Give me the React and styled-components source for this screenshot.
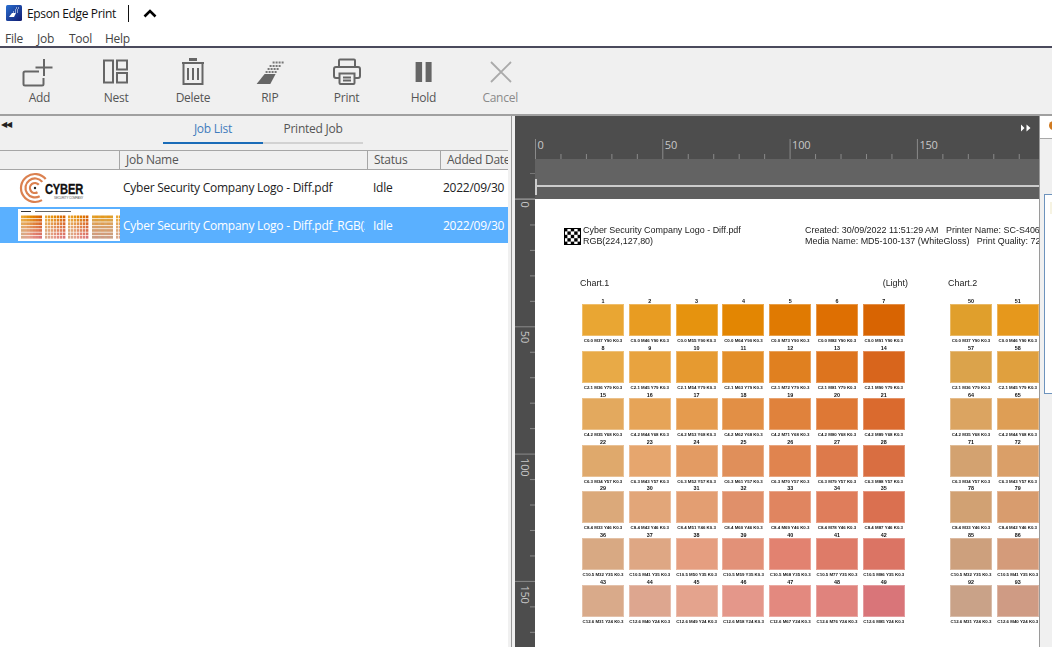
import React from "react";
import styled, { createGlobalStyle } from "styled-components";

const Global = createGlobalStyle`
  html, body { margin: 0; padding: 0; background: #fff; }
  * { box-sizing: border-box; }
`;

const UI = `"Open Sans", "Noto Sans", sans-serif`;

const Shell = styled.div`
  width: 1052px; height: 647px; overflow: hidden; display: flex; flex-direction: column;
  font-family: ${UI}; font-size: 12px; background: #fff; color: #222;
`;
const TitleBar = styled.div`
  height: 30px; display: flex; align-items: center; padding: 0 0 4px 6px; background: #fff; flex: none;
`;
const AppName = styled.span`
  margin-left: 5px; font-size: 12px; letter-spacing: -0.36px; color: #111; width: 101px; white-space: nowrap;
`;
const TitleRule = styled.span`
  width: 1px; height: 17px; background: #111;
`;
const Chevron = styled.svg`
  margin-left: 14px; width: 14px; height: 9px;
`;
const MenuBar = styled.div`
  height: 16px; display: flex; flex: none; padding: 1px 0 0 5px; font-size: 12px; letter-spacing: -0.25px; color: #444; align-items: center;
`;
const MenuItem = styled.span`
  width: ${p => p.$w}px; line-height: 16px;
`;
const Toolbar = styled.div`
  height: 70px; flex: none; display: flex; padding-left: 1px; background: #f0f0f0;
  border-top: 2px solid #4a4a5c; border-bottom: 2px solid #a0a0a0;
`;
const ToolButton = styled.div`
  width: 76.8px; display: flex; flex-direction: column; align-items: center; padding-top: 10px;
  color: ${p => (p.$off ? "#8a8a8a" : "#555")}; font-size: 12px; letter-spacing: -0.25px;
`;
const ToolIcon = styled.svg`
  width: 34px; height: 32px; display: block; overflow: visible;
`;
const ToolLabel = styled.span`
  line-height: 16px;
`;
const Body = styled.div`
  flex: 1; display: flex; min-height: 0;
`;
const LeftPane = styled.div`
  width: 508px; flex: none; display: flex; flex-direction: column; background: #fff; position: relative;
`;
const TabsRow = styled.div`
  height: 34px; flex: none; background: #f0f0f0; display: flex; justify-content: center; padding-top: 5px; padding-left: 18px;
`;
const Tab = styled.div`
  width: 100px; height: 23px; text-align: center; line-height: 16px; letter-spacing: -0.25px;
  border-bottom: 2px solid ${p => (p.$on ? "#1a6cb8" : "#d2d2d2")};
  color: ${p => (p.$on ? "#3f7cbd" : "#555")};
`;
const Collapse = styled.span`
  position: absolute; font-size: 8px; line-height: 8px; color: #222; letter-spacing: -1px; top: ${p => p.$y}px; left: ${p => p.$x}px;
`;
const HeaderRow = styled.div`
  height: 20px; flex: none; display: grid; grid-template-columns: 119px 248px 73px 1fr; background: #f0f0f0;
  border-top: 1px solid #a6a6a6; border-bottom: 1px solid #a6a6a6; color: #555; letter-spacing: -0.25px;
`;
const HeaderCell = styled.div`
  line-height: 17px; padding-left: 6px; white-space: nowrap; overflow: hidden;
  border-left: ${p => (p.$first ? "none" : "1px solid #a6a6a6")};
`;
const Row = styled.div`
  height: ${p => p.$h}px; padding-bottom: ${p => p.$pb || 0}px; flex: none; display: grid; grid-template-columns: 120px 250px 70px 1fr; align-items: center;
  background: ${p => (p.$sel ? "#5ab0ff" : "#fff")}; color: ${p => (p.$sel ? "#fff" : "#222")}; letter-spacing: -0.25px;
`;
const Cell = styled.div`
  padding-left: 3px; white-space: nowrap; overflow: hidden;
`;
const NameCell = styled(Cell)`
  margin-right: 5px;
`;
const Thumb = styled.svg`
  display: block; margin-left: 18px; background: ${p => p.$bg || "transparent"};
`;
const Gutter = styled.div`
  width: 7px; flex: none; background: #f0f0f0; display: flex; padding-left: 3px;
`;
const GutterLine = styled.div`
  width: 1px; background: #999;
`;
const Viewer = styled.div`
  width: 524px; flex: none; display: grid; grid-template-columns: 20px 1fr; grid-template-rows: 83px 1fr; background: #4d4d4d; position: relative;
  overflow: hidden;
`;
const Corner = styled.div`
  background: #4d4d4d; border-bottom: 1px solid #777; position: relative;
  &::after { content: ""; position: absolute; right: 0; top: 57px; width: 5px; height: 1px; background: #777; }
`;
const TopRuler = styled.div`
  display: flex; flex-direction: column; min-width: 0;
`;
const RulerSvg = styled.svg`
  display: block; flex: none;
`;
const PageBand = styled.div`
  flex: 1; background: #636363; position: relative;
`;
const BandFoot = styled.div`
  position: absolute; left: 0; right: 0; top: 26px; height: 14px; background: #5f5f5f; border-top: 2px solid #ccc;
`;
const BandCap = styled.div`
  position: absolute; left: 0; top: 20px; width: 2px; height: 16px; background: #ccc;
`;
const SideRuler = styled.div`
  min-height: 0;
`;
const Page = styled.div`
  background: #fff; overflow: hidden; font-family: "Liberation Sans", Arial, sans-serif; color: #222; filter: blur(0.45px);
  padding: 29px 0 0 29px;
`;
const PageHead = styled.div`
  display: flex; height: 24px; width: 700px;
`;
const Checker = styled.svg`
  width: 17px; height: 17px; flex: none; margin-right: 2px; display: block;
`;
const HeadText = styled.div`
  font-size: 8.95px; line-height: 10.5px; white-space: nowrap; width: 222px; margin-top: -3px; color: #222;
`;
const Charts = styled.div`
  display: flex; margin-top: 26px; margin-left: 16px; width: 700px;
`;
const Chart = styled.div`
  width: ${p => p.$w}px; flex: none;
`;
const ChartHead = styled.div`
  display: flex; justify-content: space-between; font-size: 8.95px; line-height: 10px; height: 22px; padding-right: 40px;
`;
const Grid = styled.div`
  display: grid; grid-template-columns: repeat(${p => p.$cols}, 42px); column-gap: 4.8px; grid-auto-rows: 46.85px; margin-left: 2px;
`;
const Item = styled.div`
  display: flex; flex-direction: column; align-items: center;
`;
const Num = styled.div`
  font-size: 5.4px; line-height: 5px; height: 5px; font-weight: 700; color: #111; margin-top: -1px;
`;
const Swatch = styled.div`
  width: 42px; height: 32px; flex: none; background: ${p => p.$c}; box-shadow: inset 0 0 0 1px rgba(255,255,255,0.28);
`;
const Caption = styled.div`
  font-size: 4.4px; line-height: 5px; font-weight: 700; color: #111; white-space: nowrap; margin-top: 2px;
`;
const Side = styled.div`
  width: 13px; flex: none; background: #f0f0f0; border-left: 1px solid #9a9a9a; display: flex; flex-direction: column;
`;
const SideTab = styled.div`
  height: 23px; background: #fff; border-bottom: 1px solid #a8a8a8; flex: none; padding: 5px 0 0 9px;
`;
const SideDot = styled.div`
  width: 5px; height: 9px; border-radius: 5px 0 0 5px; background: #d07a20;
`;
const SideBox = styled.div`
  margin: 55px 0 0 4px; height: 200px; border: 1px solid #6d93bd; border-right: none; background: #fff; padding: 7px 0 0 5px;
`;
const SideChip = styled.div`
  height: 12px; background: #f6f3e2;
`;

const rows1 = [
  ["#E9A633","#E89C22","#E6930E","#E38602","#E07A02","#DE6F02","#D86402"],
  ["#E8AA47","#E8A33F","#E69A30","#E38E28","#E08020","#DD741E","#D8651C"],
  ["#E3A95E","#E6A458","#E59B4E","#E28F45","#E0823C","#DE7835","#DA6A2E"],
  ["#DFA96C","#E6A66E","#E39B63","#E08F5A","#E0844F","#DD7A4B","#D96E41"],
  ["#DBA97A","#E2A679","#E39E72","#E0906A","#E08560","#DF7D5B","#DA7050"],
  ["#D8A983","#DEA784","#E59E80","#E29178","#E28270","#DE7B68","#DB7464"],
  ["#D9AA8A","#DDA68F","#E4A38D","#E4978A","#E3897F","#E0837D","#D97579"],
];
const rows2 = [
  ["#E09F2C","#E6981C"],["#DBA34B","#E0A03E"],["#DBA461","#DE9E55"],["#D3A270","#DA9F68"],
  ["#D1A173","#D89C6E"],["#CDA07D","#D49B7A"],["#C9A288","#CF9B84"],
];
const cap = (r, c) => `C${(r * 2.1).toFixed(1)} M${37 + c * 9 - r} Y${90 - r * 11} K0.3`;

const Cells = ({ rows, start }) =>
  rows.flatMap((row, r) =>
    row.map((c, i) => (
      <Item key={`${r}-${i}`}>
        <Num>{start + r * 7 + i}</Num>
        <Swatch $c={c} />
        <Caption>{cap(r, i)}</Caption>
      </Item>
    ))
  );

const Stroke = { fill: "none", stroke: "#666", strokeWidth: 2 };

const AddIcon = () => (
  <ToolIcon viewBox="0 0 34 32">
    <path d="M17 13.500H3a1.500 1.500 0 0 0-1.500 1.500v11a1.500 1.500 0 0 0 1.500 1.500h17a1.500 1.500 0 0 0 1.500-1.500V20" {...Stroke} />
    <path d="M22 1v17M13.500 9.500h17" {...Stroke} />
  </ToolIcon>
);
const NestIcon = () => (
  <ToolIcon viewBox="0 0 34 32">
    <path d="M5 2.500h9v22H5zM18 2.500h10v9H18zM18 15h10v9.500H18z" {...Stroke} />
  </ToolIcon>
);
const DeleteIcon = () => (
  <ToolIcon viewBox="0 0 34 32">
    <path d="M6 4h22v2H6zM13 0h8v3h-8z" fill="#666" />
    <path d="M7.500 6v20h19V6" {...Stroke} />
    <path d="M12 10v12M17 10v12M22 10v12" {...Stroke} />
  </ToolIcon>
);
const RipIcon = () => (
  <ToolIcon viewBox="0 0 34 32">
    <path d="M3.600 26l8-10h11l-5.300 10z" fill="#666" />
    <g stroke="#777" strokeWidth="2" strokeDasharray="2 1">
      <path d="M12.600 14h12M14.600 11h12M16.600 8h12M19.600 4.500h11" />
    </g>
  </ToolIcon>
);
const PrintIcon = () => (
  <ToolIcon viewBox="0 0 34 32">
    <path d="M9 9V2.500a1 1 0 0 1 1-1h14a1 1 0 0 1 1 1V9" {...Stroke} />
    <path d="M9 20H6a2 2 0 0 1-2-2v-7a2 2 0 0 1 2-2h22a2 2 0 0 1 2 2v7a2 2 0 0 1-2 2h-3" {...Stroke} />
    <path d="M9.500 15.500h15v9.500a1 1 0 0 1-1 1h-13a1 1 0 0 1-1-1z" {...Stroke} />
    <path d="M13 19.500h8M13 22.500h8" {...Stroke} />
  </ToolIcon>
);
const HoldIcon = () => (
  <ToolIcon viewBox="0 0 34 32">
    <path d="M9.600 4h6.500v20H9.600zM19.600 4h6v20h-6z" fill="#666" />
  </ToolIcon>
);
const CancelIcon = () => (
  <ToolIcon viewBox="0 0 34 32">
    <path d="M8 4l20 20M28 4L8 24" fill="none" stroke="#aaa" strokeWidth="1.800" />
  </ToolIcon>
);

const tools = [
  ["Add", AddIcon], ["Nest", NestIcon], ["Delete", DeleteIcon], ["RIP", RipIcon],
  ["Print", PrintIcon], ["Hold", HoldIcon], ["Cancel", CancelIcon, true],
];

const AppLogo = () => (
  <svg width="16" height="16" viewBox="0 0 16 16" style={{ display: "block" }}>
    <defs>
      <linearGradient id="lg" x1="0" y1="0" x2="1" y2="1">
        <stop offset="0" stopColor="#2a6fd0" />
        <stop offset="1" stopColor="#101a70" />
      </linearGradient>
    </defs>
    <rect width="16" height="16" rx="1.500" fill="url(#lg)" />
    <path d="M3 12l3-4h4l-2 4z" fill="#fff" />
    <g stroke="#fff" strokeWidth="1" strokeDasharray="1 1"><path d="M7 7h5M9 5h4M10 3h4" /></g>
  </svg>
);

const CyberLogo = () => (
  <Thumb width="70" height="34" viewBox="0 0 70 34">
    <g fill="none" stroke="#DB8150" strokeWidth="2.200">
      <path d="M27.700 8A14 14 0 1 0 24 29.100" />
      <path d="M24.300 10.900A9.500 9.500 0 1 0 21.700 25.200" />
      <path d="M20.800 13.800A5 5 0 1 0 19.500 21.300" />
    </g>
    <circle cx="17" cy="17" r="1.200" fill="#222" />
    <text x="27" y="22.500" fontFamily="Liberation Sans" fontWeight="700" fontSize="14" textLength="38" lengthAdjust="spacingAndGlyphs" fill="#111" stroke="#111" strokeWidth=".3">CYBER</text>
    <text x="36" y="27.500" fontFamily="Liberation Sans" fontSize="3" textLength="29" fill="#555">SECURITY COMPANY</text>
  </Thumb>
);

const ThumbChart = () => (
  <Thumb $bg="#fff" width="102" height="32" viewBox="0 0 102 32">
    <rect x="3" y="2" width="10" height="1" fill="#333" />
    <rect x="17" y="2" width="36" height="1" fill="#666" />
    {[3, 27, 50, 74, 98].map((x, g) =>
      rows1.map((row, r) =>
        row.map((c, i) => (
          <rect key={`${g}${r}${i}`} x={x + i * 3} y={6.500 + r * 3.400} width={g === 0 || g === 3 ? 3 : 2.400} height="2.700"
            fill={g === 3 ? rows2[r][i % 2] : c} />
        ))
      )
    )}
  </Thumb>
);

const RulerTop = () => {
  const ticks = [];
  for (let i = 0; i < 21; i++) {
    const x = 0.5 + i * 25.46;
    const major = i % 5 === 0;
    ticks.push(<line key={i} x1={x} x2={x} y1={major ? 23 : 38} y2="43" stroke="#8a8a8a" />);
    if (major) ticks.push(<text key={`t${i}`} x={x + 2} y="33" fontSize="11" fontFamily="Open Sans" fill="#c8c8c8" letterSpacing="-.2">{i * 10}</text>);
  }
  return <RulerSvg width="504" height="43">{ticks}
    <path d="M486 8.500l3.500 3.500-3.500 3.500zM491.500 8.500l4 3.500-4 3.500z" fill="#fff" />
  </RulerSvg>;
};

const RulerLeft = () => {
  const ticks = [];
  for (let i = 0; i < 19; i++) {
    const y = 0.5 + i * 25.46;
    const major = i % 5 === 0;
    ticks.push(<line key={i} x1={major ? 0 : 15} x2="20" y1={y} y2={y} stroke="#8a8a8a" />);
    if (major && i > 0) ticks.push(<text key={`t${i}`} transform={`translate(6,${y + 4}) rotate(90)`} fontSize="11" fontFamily="Open Sans" fill="#c8c8c8" letterSpacing="-.2">{i * 10}</text>);
    if (i === 0) ticks.push(<text key="z" transform={`translate(6,${y + 2}) rotate(90)`} fontSize="11" fontFamily="Open Sans" fill="#c8c8c8">0</text>);
  }
  return <RulerSvg width="20" height="448">{ticks}</RulerSvg>;
};

const CheckerIcon = () => {
  const cells = [];
  for (let y = 0; y < 5; y++) for (let x = 0; x < 5; x++) if ((x + y) % 2 === 0) cells.push(<rect key={`${x}${y}`} x={x * 3.400} y={y * 3.400} width="3.400" height="3.400" fill="#000" />);
  return <Checker viewBox="0 0 17 17">{cells}<rect x=".5" y=".5" width="16" height="16" fill="none" stroke="#000" /></Checker>;
};

export default function App() {
  return (
    <Shell>
      <Global />
      <TitleBar>
        <AppLogo />
        <AppName>Epson Edge Print</AppName>
        <TitleRule />
        <Chevron viewBox="0 0 14 9"><path d="M1.500 7.500L7 2l5.500 5.500" fill="none" stroke="#000" strokeWidth="2.600" /></Chevron>
      </TitleBar>
      <MenuBar>
        <MenuItem $w={32}>File</MenuItem>
        <MenuItem $w={32}>Job</MenuItem>
        <MenuItem $w={36}>Tool</MenuItem>
        <MenuItem $w={30}>Help</MenuItem>
      </MenuBar>
      <Toolbar>
        {tools.map(([name, Icon, off]) => (
          <ToolButton key={name} $off={off}>
            <Icon />
            <ToolLabel>{name}</ToolLabel>
          </ToolButton>
        ))}
      </Toolbar>
      <Body>
        <LeftPane>
          <Collapse $x={1} $y={4}>◀◀</Collapse>
          <TabsRow>
            <Tab $on>Job List</Tab>
            <Tab>Printed Job</Tab>
          </TabsRow>
          <HeaderRow>
            <HeaderCell $first />
            <HeaderCell>Job Name</HeaderCell>
            <HeaderCell>Status</HeaderCell>
            <HeaderCell>Added Date</HeaderCell>
          </HeaderRow>
          <Row $h={37} $pb={2}>
            <CyberLogo />
            <NameCell>Cyber Security Company Logo - Diff.pdf</NameCell>
            <Cell>Idle</Cell>
            <Cell>2022/09/30</Cell>
          </Row>
          <Row $h={36} $sel>
            <ThumbChart />
            <NameCell>Cyber Security Company Logo - Diff.pdf_RGB(224,127,80)</NameCell>
            <Cell>Idle</Cell>
            <Cell>2022/09/30</Cell>
          </Row>
        </LeftPane>
        <Gutter><GutterLine /></Gutter>
        <Viewer>
          <Corner />
          <TopRuler>
            <RulerTop />
            <PageBand><BandFoot /><BandCap /></PageBand>
          </TopRuler>
          <SideRuler><RulerLeft /></SideRuler>
          <Page>
            <PageHead>
              <CheckerIcon />
              <HeadText>Cyber Security Company Logo - Diff.pdf<br />RGB(224,127,80)</HeadText>
              <HeadText>Created: 30/09/2022 11:51:29 AM &nbsp; Printer Name: SC-S40600<br />Media Name: MD5-100-137 (WhiteGloss) &nbsp; Print Quality: 720x720</HeadText>
            </PageHead>
            <Charts>
              <Chart $w={368}>
                <ChartHead><span>Chart.1</span><span>(Light)</span></ChartHead>
                <Grid $cols={7}><Cells rows={rows1} start={1} /></Grid>
              </Chart>
              <Chart $w={300}>
                <ChartHead><span>Chart.2</span></ChartHead>
                <Grid $cols={2}><Cells rows={rows2} start={50} /></Grid>
              </Chart>
            </Charts>
          </Page>
        </Viewer>
        <Side>
          <SideTab><SideDot /></SideTab>
          <SideBox><SideChip /></SideBox>
        </Side>
      </Body>
    </Shell>
  );
}
